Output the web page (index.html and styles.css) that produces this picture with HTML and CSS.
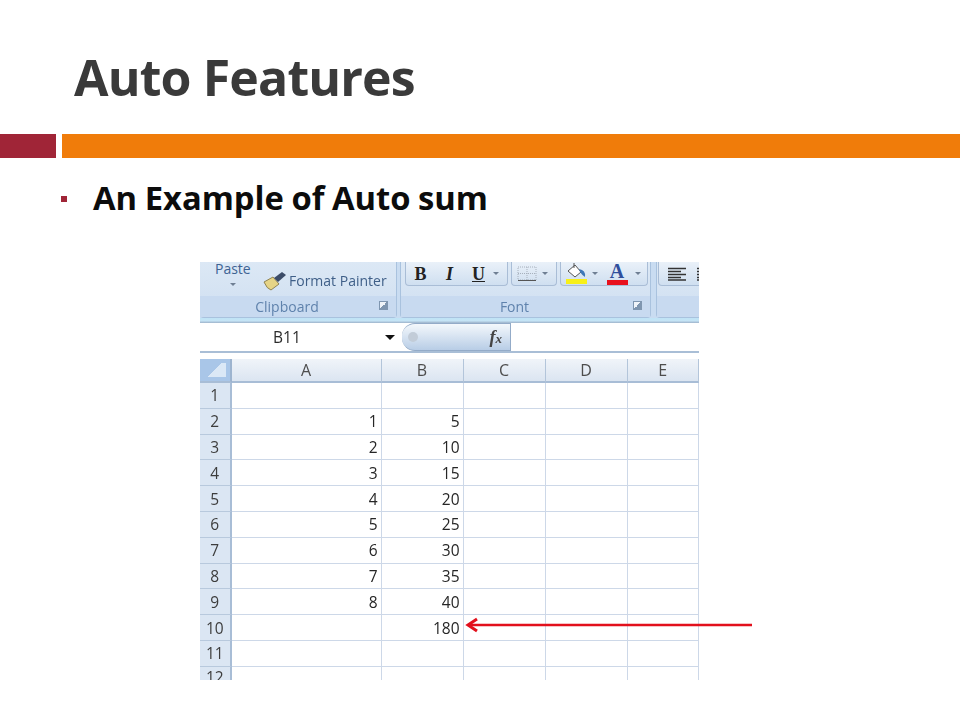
FILE: index.html
```html
<!DOCTYPE html>
<html lang="en">
<head>
<meta charset="utf-8">
<title>Auto Features</title>
<link rel="stylesheet" href="styles.css">
</head>
<body>
<main class="slide">
  <h1 class="title">Auto Features</h1>
  <div class="rule"><div class="rule-red"></div><div class="rule-orange"></div></div>
  <div class="point"><span class="bullet"></span><span class="point-text">An Example of Auto sum</span></div>
  <div class="excel-wrap">
    <div class="excel">
      <div class="ribbon">
        <section class="group clip">
          <div class="group-body clip-body">
            <div class="paste"><span>Paste</span><i class="caret grey"></i></div>
            <div class="painter">
              <svg width="25" height="20" viewBox="0 0 25 20"><path d="M1 11 L10 6 L16 13 L8 19 Q4 18 1 11 Z" fill="#e6d486" stroke="#8f8354" stroke-width="1"/><path d="M11 7 L19 1 L23 4 L15 11 Z" fill="#3c4c68"/></svg>
              <span>Format Painter</span>
            </div>
          </div>
          <div class="group-label"><span class="label-text">Clipboard</span><i class="launcher"></i></div>
        </section>
        <section class="group font">
          <div class="group-body font-body">
            <div class="tools tools-biu"><b class="tb bold">B</b><b class="tb ital">I</b><b class="tb und">U</b><i class="caret grey"></i></div>
            <div class="tools tools-border">
              <svg width="24" height="20" viewBox="0 0 24 20"><path d="M3 3H21V16H3ZM12 3V16M3 9.500H21" fill="none" stroke="#a7b0bc" stroke-dasharray="1 1"/><path d="M3 16.500H21" stroke="#555"/></svg>
              <i class="caret grey"></i>
            </div>
            <div class="tools tools-color">
              <div class="swatch-tool">
                <svg width="22" height="16" viewBox="0 0 22 16"><path d="M3 8 L10 2 L16 9 L10 14 Z" fill="#fff" stroke="#555"/><path d="M9 0 V5" stroke="#555"/><path d="M14 6 Q21 7 20 14 Q17 12 15 9 Z" fill="#3f78b8"/></svg>
                <i class="swatch yellow"></i>
              </div>
              <i class="caret grey"></i>
              <div class="swatch-tool letter-tool"><b class="letter">A</b><i class="swatch red"></i></div>
              <i class="caret grey"></i>
            </div>
          </div>
          <div class="group-label"><span class="label-text">Font</span><i class="launcher"></i></div>
        </section>
        <section class="group align">
          <div class="group-body align-body">
            <div class="tools tools-align">
              <svg width="20" height="14" viewBox="0 0 20 14"><path d="M1 1.500H19M1 4.500H14M1 7.500H19M1 10.500H14M1 13H19" stroke="#333" stroke-width="1.600"/></svg>
              <svg width="6" height="14" viewBox="0 0 6 14"><path d="M1 1.500H6M1 4.500H6M1 7.500H6M1 10.500H6M1 13H6" stroke="#333" stroke-width="1.600"/></svg>
            </div>
          </div>
          <div class="group-label"></div>
        </section>
      </div>
      <div class="ribbon-edge"></div>
      <div class="formula">
        <div class="namebox"><span>B11</span><i class="caret black"></i></div>
        <div class="fxbox"><i class="orb"></i><em>f<small>x</small></em></div>
        <div class="input"></div>
      </div>
      <div class="sheet">
        <div class="corner"><i></i></div><div class="ch">A</div><div class="ch">B</div><div class="ch">C</div><div class="ch">D</div><div class="ch">E</div>

        <div class="rh">1</div><div class="c"></div><div class="c"></div><div class="c"></div><div class="c"></div><div class="c"></div>
        <div class="rh">2</div><div class="c">1</div><div class="c">5</div><div class="c"></div><div class="c"></div><div class="c"></div>
        <div class="rh">3</div><div class="c">2</div><div class="c">10</div><div class="c"></div><div class="c"></div><div class="c"></div>
        <div class="rh">4</div><div class="c">3</div><div class="c">15</div><div class="c"></div><div class="c"></div><div class="c"></div>
        <div class="rh">5</div><div class="c">4</div><div class="c">20</div><div class="c"></div><div class="c"></div><div class="c"></div>
        <div class="rh">6</div><div class="c">5</div><div class="c">25</div><div class="c"></div><div class="c"></div><div class="c"></div>
        <div class="rh">7</div><div class="c">6</div><div class="c">30</div><div class="c"></div><div class="c"></div><div class="c"></div>
        <div class="rh">8</div><div class="c">7</div><div class="c">35</div><div class="c"></div><div class="c"></div><div class="c"></div>
        <div class="rh">9</div><div class="c">8</div><div class="c">40</div><div class="c"></div><div class="c"></div><div class="c"></div>
        <div class="rh">10</div><div class="c"></div><div class="c">180</div><div class="c"></div><div class="c"></div><div class="c"></div>
        <div class="rh">11</div><div class="c"></div><div class="c"></div><div class="c"></div><div class="c"></div><div class="c"></div>
        <div class="rh rh-last">12</div><div class="c"></div><div class="c"></div><div class="c"></div><div class="c"></div><div class="c"></div>
      </div>
    </div>
    <svg class="arrow" width="290" height="18" viewBox="0 0 290 18"><path d="M5 9H288" stroke="#e2101c" stroke-width="2.500" fill="none"/><path d="M13 3 L4 9 L13 15" stroke="#e2101c" stroke-width="3" fill="none"/></svg>
  </div>
</main>
</body>
</html>
```
FILE: styles.css
```css
* { box-sizing: border-box; }
html, body { margin: 0; padding: 0; background: #fff; }
.slide { width: 960px; height: 720px; overflow: hidden; font-family: "Open Sans", "Liberation Sans", sans-serif; }

.title { margin: 0; padding: 43px 0 0 74px; height: 134px; font-size: 50px; line-height: 68px; font-weight: 700; color: #3a3a3a; letter-spacing: -0.85px; }

.rule { display: flex; gap: 6px; height: 24px; }
.rule-red { width: 56px; background: #a02537; }
.rule-orange { flex: 1; background: #f07c0a; }

.point { display: flex; align-items: center; height: 56px; margin-top: 11px; padding-left: 61px; }
.bullet { width: 6px; height: 6px; background: #a02537; margin-right: 26px; margin-top: 3px; }
.point-text { font-size: 32.750px; font-weight: 700; color: #0c0c0c; letter-spacing: 0; word-spacing: -1px; }

.excel-wrap { position: relative; margin: 37px 0 0 200px; width: 500px; }
.excel { width: 499px; height: 418px; overflow: hidden; color: #333; filter: blur(0.35px); }

.ribbon { display: flex; height: 56px; background: #c9dcf1; }
.group { flex: none; display: flex; flex-direction: column; border: 1px solid #a9c2de; border-top: 0; border-radius: 0 0 4px 4px; background: linear-gradient(#dce8f5, #cfdff1); }
.clip { width: 197px; border-left: 0; margin-right: 3px; }
.font { width: 251px; margin-right: 5px; }
.align { flex: 1; border-right: 0; }
.group-body { height: 34px; }
.group-label { position: relative; flex: 1; display: flex; align-items: center; justify-content: center; background: #c8daf0; font-size: 14px; color: #5f82ac; }
.label-text { margin-right: 22px; }
.launcher { position: absolute; right: 8px; top: 5px; width: 9px; height: 9px; border: 1px solid #7f96b0; background: linear-gradient(135deg, #f0f4f9 50%, #7f96b0 50%); }
.ribbon-edge { height: 5px; background: linear-gradient(#bfe3f6 0, #c5e4f5 55%, #9db2ca 100%); }

.clip-body { position: relative; }
.paste { position: absolute; left: 15px; top: 0; display: flex; flex-direction: column; align-items: center; font-size: 14px; line-height: 14px; color: #3f6393; }
.paste .caret { margin-top: 7px; }
.painter { position: absolute; left: 63px; top: 9px; display: flex; align-items: center; gap: 1px; font-size: 14px; line-height: 20px; color: #3f5f88; white-space: nowrap; font-weight: 500; }

.caret { display: inline-block; flex: none; width: 0; height: 0; border-left: 3px solid transparent; border-right: 3px solid transparent; border-top: 3px solid #6f7f93; }
.caret.black { border-left-width: 5px; border-right-width: 5px; border-top: 5px solid #111; }

.font-body { display: flex; align-items: flex-start; gap: 3px; padding-left: 4px; }
.tools { display: flex; align-items: center; height: 24px; border: 1px solid #a9bdd6; border-top: 0; border-radius: 0 0 4px 4px; background: linear-gradient(#eaf1f9, #cfdff0); }
.tools-biu { width: 103px; padding-left: 0; }
.tb { width: 29px; text-align: center; font-family: "Liberation Serif", serif; font-size: 18px; line-height: 20px; color: #222; }
.ital { font-style: italic; }
.und { text-decoration: underline; }
.tools-border { width: 46px; padding-left: 3px; gap: 3px; }
.tools-color { width: 88px; padding-left: 4px; gap: 5px; }
.swatch-tool { flex: none; display: flex; flex-direction: column; align-items: center; width: 22px; height: 22px; }
.swatch { display: block; flex: none; width: 21px; height: 5px; }
.yellow { background: #f7f019; }
.red { background: #e8101c; }
.letter { font-family: "Liberation Serif", serif; font-size: 20px; line-height: 17px; color: #2f4e9c; }
.letter-tool { margin: 0 2px 0 3px; }

.align-body { padding-left: 1px; }
.tools-align { width: 60px; padding-left: 8px; gap: 9px; }

.formula { display: flex; height: 30px; border-bottom: 2px solid #a9bed6; background: #fff; }
.namebox { position: relative; width: 203px; display: flex; align-items: center; font-size: 15.500px; font-weight: 500; color: #2b2b2b; padding-left: 73px; }
.namebox .caret { position: absolute; left: 185px; top: 12px; }
.fxbox { position: relative; flex: none; width: 109px; margin-left: -1px; background: linear-gradient(#f4f8fc, #b8cde6); border: 1px solid #93abc8; border-left: 0; border-radius: 13px 0 0 13px; }
.orb { position: absolute; left: 6px; top: 8px; width: 10px; height: 10px; border-radius: 50%; background: #c2ccd8; }
.fxbox em { position: absolute; right: 8px; top: 3px; font-family: "Liberation Serif", serif; font-weight: 700; font-size: 18px; line-height: 20px; color: #444; }
.fxbox small { font-size: 13px; }
.input { flex: 1; background: #fff; }

.sheet { display: grid; margin-top: 6px; grid-template-columns: 31.500px 150px 82px 82px 82px 71.500px; grid-template-rows: 24px repeat(11, 25.800px) 14px; }
.corner { background: #a9c6e8; border-right: 2px solid #9db4cf; border-bottom: 2px solid #a8bdd6; padding: 4px; }
.corner i { display: block; width: 100%; height: 100%; background: linear-gradient(135deg, transparent 50%, #dbe8f6 50%); }
.ch { display: flex; align-items: center; justify-content: center; font-size: 16px; color: #4d4d4d; background: linear-gradient(#f0f4f9, #dbe5f1); border-right: 1px solid #b3c5da; border-bottom: 2px solid #a8bdd6; }
.rh { display: flex; align-items: center; justify-content: center; font-size: 15.500px; font-weight: 500; color: #3d3d3d; background: #dbe6f3; border-right: 2px solid #a8bdd6; border-bottom: 1px solid #b8c9dd; }
.rh-last { align-items: flex-start; line-height: 20px; height: 26px; }
.c { display: flex; align-items: center; justify-content: flex-end; padding-right: 3px; font-size: 15.500px; font-weight: 500; color: #262626; border-right: 1px solid #cdd8e8; border-bottom: 1px solid #cdd8e8; }

.arrow { position: absolute; left: 264px; top: 354px; }
```
